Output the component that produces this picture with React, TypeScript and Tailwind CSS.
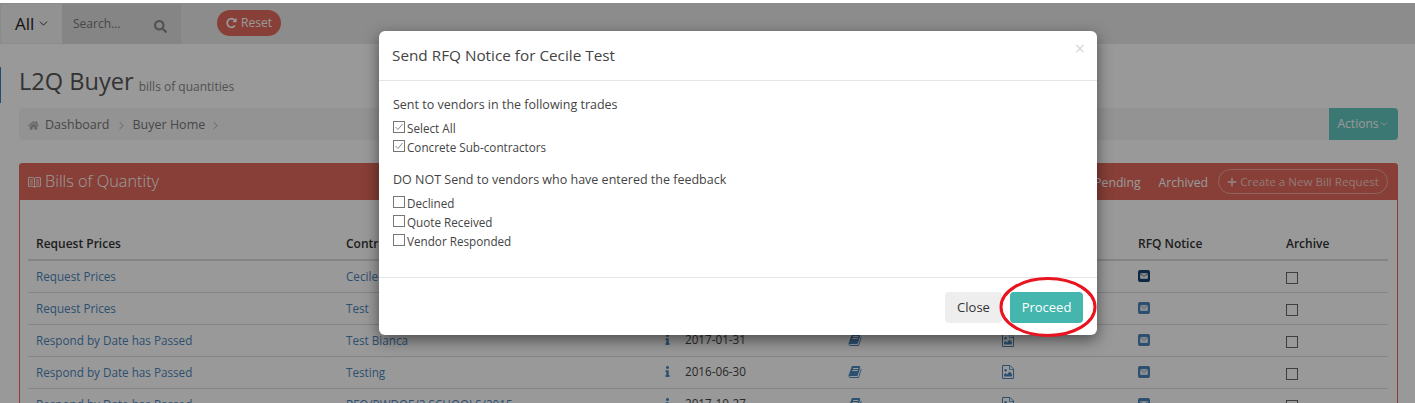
import { ChevronDown, ChevronRight } from "lucide-react";
import { FaHome, FaInfo, FaPlus, FaSearch } from "react-icons/fa";

const rows = [
  ["Request Prices", "Cecile Test", "2017-02-28", true],
  ["Request Prices", "Test", "2017-02-15", false],
  ["Respond by Date has Passed", "Test Bianca", "2017-01-31", false],
  ["Respond by Date has Passed", "Testing", "2016-06-30", false],
  ["Respond by Date has Passed", "RFQ/PWDOE/2 SCHOOLS/2015", "2017-10-27", false],
] as const;

function BookIcon() {
  return (
    <svg viewBox="0 0 1792 1792" className="h-[14px] w-[14px] text-[#4d86bb]" fill="currentColor">
      <path d="M1703 478q40 57 18 129l-275 906q-19 64-76.5 107.5t-122.5 43.5h-923q-77 0-148.5-53.5t-99.5-131.5q-24-67-2-127 0-4 3-27t4-37q1-8-3-21.5t-3-19.5q2-11 8-21t16.5-23.5 16.5-23.5q23-38 45-91.5t30-91.5q3-10 .5-30t-.5-28q3-11 17-28t17-23q21-36 42-92t25-90q1-9-2.5-32t.5-28q4-13 22-30.5t22-22.5q19-26 42.5-84.5t27.5-96.5q1-8-3-25.5t-2-26.5q2-8 9-18t18-23 17-21q8-12 16.5-30.5t15-35 16-36 19.5-32 26.5-23.5 36-11.5 47.5 5.5l-1 3q38-9 51-9h761q74 0 114 56t18 130l-274 906q-36 119-71.5 153.5t-128.5 34.5h-869q-27 0-38 15-11 16-1 43 24 70 144 70h923q29 0 56-15.5t35-41.5l300-987q7-22 5-57 38 15 59 43zm-1064 2q-4 13 2 22.5t20 9.5h608q13 0 25.5-9.5t16.5-22.5l21-64q4-13-2-22.5t-20-9.5h-608q-13 0-25.5 9.5t-16.5 22.5zm-83 256q-4 13 2 22.5t20 9.5h608q13 0 25.5-9.5t16.5-22.5l21-64q4-13-2-22.5t-20-9.5h-608q-13 0-25.5 9.5t-16.5 22.5z" />
    </svg>
  );
}

function FileImageIcon() {
  return (
    <svg viewBox="0 0 12 14" className="h-[14px] w-[12px] text-[#4d86bb]" fill="none" stroke="currentColor">
      <path d="M.5.5H8L11.5 4V13.5H.5Z" />
      <path d="M7.5.5V4.5H11.5" strokeWidth="0.8" />
      <circle cx="3.6" cy="5.2" r="1.2" fill="currentColor" stroke="none" />
      <path d="M2 11.5V9.6L3.6 8L5 9.4L7.6 6.6L10 9V11.5Z" fill="currentColor" stroke="none" />
    </svg>
  );
}

function MailIcon({ dark }: { dark: boolean }) {
  return (
    <svg viewBox="0 0 12 12" className={dark ? "h-[12px] w-[12px] text-[#16436f]" : "h-[12px] w-[12px] text-[#4d86bb]"}>
      <rect width="12" height="12" rx="2" fill="currentColor" />
      <rect x="2.2" y="3.2" width="7.6" height="5.6" fill="#f2f2f2" />
      <path d="M2.2 3.6L6 6.4L9.8 3.6" fill="none" stroke="currentColor" strokeWidth="0.7" />
    </svg>
  );
}

function OpenBookIcon() {
  return (
    <svg viewBox="0 0 13 12" className="h-[12px] w-[13px]" fill="none" stroke="currentColor" strokeWidth="0.9">
      <path d="M6.5 2.4C5 1.4 2.8 1.2.6 1.6V10.4C2.8 10 5 10.2 6.5 11.2C8 10.2 10.2 10 12.4 10.4V1.6C10.2 1.2 8 1.4 6.5 2.4V11.2" />
      <path d="M2 4H5M2 6H5M2 8H5M8 4H11M8 6H11M8 8H11" strokeWidth="0.8" />
    </svg>
  );
}

function ResetIcon() {
  return (
    <svg viewBox="0 0 1536 1792" className="h-[12px] w-[11px]" fill="currentColor">
      <path d="M1536 256v448q0 26-19 45t-45 19h-448q-42 0-59-40-17-39 14-69l138-138q-148-137-349-137-104 0-198.5 40.5t-163.5 109.5-109.5 163.5-40.5 198.5 40.5 198.5 109.5 163.5 163.5 109.5 198.5 40.5q119 0 225-52t179-147q7-10 23-12 15 0 25 9l137 138q9 8 9.5 20.5t-7.5 22.5q-109 132-264 204.5t-327 72.5q-156 0-298-61t-245-164-164-245-61-298 61-298 164-245 245-164 298-61q147 0 284.5 55.5t244.5 156.5l130-129q29-31 70-14 39 17 39 59z" />
    </svg>
  );
}

function Box({ checked }: { checked?: boolean }) {
  return (
    <span className="-mt-[3px] flex h-[12px] w-[12px] shrink-0 items-center justify-center border border-[#767676] bg-white">
      {checked && (
        <svg viewBox="0 0 10 10" className="h-[10px] w-[10px]" fill="none" stroke="#8a8a8a" strokeWidth="1">
          <path d="M1.5 5 L4 7.5 L8.5 2" />
        </svg>
      )}
    </span>
  );
}

function Check({ label, checked }: { label: string; checked?: boolean }) {
  return (
    <div className="flex h-[19px] items-center gap-[2px] text-[11.7px] text-[#444]">
      <Box checked={checked} />
      <span>{label}</span>
    </div>
  );
}

export default function App() {
  return (
    <div className="relative h-[403px] w-[1415px] overflow-hidden bg-white font-['Open_Sans',sans-serif] text-[13px] text-[#333]">
      <div className="mt-[3px] flex h-[41px] items-stretch bg-[#e9e9e9]">
        <div className="ml-[1px] mt-[1px] flex h-[39px] w-[61px] items-center rounded-l-[4px] bg-[#f3f3f3] pl-[14px] text-[17px] text-[#222]">
          All <ChevronDown className="ml-[3px] h-[13px] w-[13px]" strokeWidth={1.6} />
        </div>
        <div className="relative mt-[1px] flex h-[40px] w-[119px] items-center bg-[#dedede] pl-[11px] text-[12px] text-[#777]">
          Search...
          <FaSearch className="absolute left-[92px] top-[16px] text-[13px] text-[#888]" />
        </div>
        <div className="ml-[36px] mt-[7px] flex h-[26px] w-[64px] items-center justify-center gap-[4px] rounded-full bg-[#e26a5d] text-[12px] text-[#fff]">
          <ResetIcon /> Reset
        </div>
      </div>

      <main className="relative bg-white px-[19px] pr-[17px]">
        <div className="absolute left-0 top-[23px] h-[36px] w-[1px] bg-[#3b7fb8]" />
        <div className="flex h-[64px] items-end pb-[12px]">
          <h1 className="text-[23.6px] font-normal leading-[30px] text-[#555]">L2Q Buyer</h1>
          <span className="ml-[5px] text-[12px] text-[#888]">bills of quantities</span>
        </div>
        <div className="flex h-[32px] items-center justify-between rounded-[4px] bg-[#f5f5f5]">
          <div className="flex items-center pl-[9px] pt-[2px] text-[12.5px] text-[#777]">
            <FaHome className="mr-[6px] text-[11px] text-[#aaa]" /> Dashboard
            <ChevronRight className="mx-[5px] h-[13px] w-[13px] text-[#999]" strokeWidth={1.5} /> Buyer Home
            <ChevronRight className="ml-[4px] h-[13px] w-[13px] text-[#999]" strokeWidth={1.5} />
          </div>
          <div className="flex h-[32px] w-[69px] items-center justify-center rounded-r-[4px] bg-[#65c8c0] text-[12px] text-white">
            Actions <ChevronDown className="ml-[1px] h-[10px] w-[10px]" strokeWidth={2} />
          </div>
        </div>

        <section className="mt-[23px] rounded-t-[4px] border-x border-[#e7685d]">
          <div className="-mx-px flex h-[37px] items-center justify-between rounded-t-[4px] bg-[#e26a5d] pl-[9px] pr-[10px] text-white">
            <div className="flex items-center text-[16.3px] font-light">
              <OpenBookIcon />
              <span className="ml-[4px]">Bills of Quantity</span>
            </div>
            <div className="flex items-center text-[12.2px]">
              <span className="mt-[4px]">Pending</span>
              <span className="ml-[18px] mt-[4px]">Archived</span>
              <span className="ml-[10px] flex h-[25px] w-[170px] items-center justify-center gap-[3px] rounded-full border border-[#f0a79f] text-[11.6px] text-[#f5c9c3]">
                <FaPlus className="text-[10px]" /> Create a New Bill Request
              </span>
            </div>
          </div>

          <div className="px-[8px] pt-[28px]">
            <table className="w-[1360px] table-fixed border-collapse text-[11.7px]">
              <colgroup>
                <col className="w-[310px]" />
                <col className="w-[310px]" />
                <col className="w-[190px]" />
                <col className="w-[154px]" />
                <col className="w-[138px]" />
                <col className="w-[148px]" />
                <col className="w-[110px]" />
              </colgroup>
              <thead>
                <tr className="h-[32px] border-b-2 border-[#ddd] text-left text-[12px] font-semibold text-[#333]">
                  <th className="pl-[8px] font-semibold">Request Prices</th>
                  <th className="pl-[8px] font-semibold">Contract</th>
                  <th className="pl-[8px] font-semibold">Date</th>
                  <th className="pl-[8px] font-semibold">Bill</th>
                  <th className="pl-[8px] font-semibold">Files</th>
                  <th className="pl-[8px] font-semibold">RFQ Notice</th>
                  <th className="pl-[8px] font-semibold">Archive</th>
                </tr>
              </thead>
              <tbody>
                {rows.map(([status, name, date, dark], i) => (
                  <tr key={i} className="h-[32px] border-b border-[#ddd]">
                    <td className="pl-[8px] pt-[1px] text-[#4d86bb]">{status}</td>
                    <td className="pl-[8px] pt-[1px] text-[#4d86bb]">{name}</td>
                    <td className="pl-[14px]">
                      <span className="flex items-center gap-[12px]">
                        <FaInfo className="text-[11px] text-[#4d86bb]" />
                        <span className="text-[#444]">{date}</span>
                      </span>
                    </td>
                    <td className="pl-[10px]"><BookIcon /></td>
                    <td className="pl-[10px]"><FileImageIcon /></td>
                    <td className="pl-[8px]"><MailIcon dark={dark} /></td>
                    <td className="pl-[8px]">
                      <span className="mt-[4px] block h-[12px] w-[12px] border border-[#666]" />
                    </td>
                  </tr>
                ))}
              </tbody>
            </table>
          </div>
        </section>
      </main>

      <div className="absolute inset-0 top-[3px] bg-black/40" />

      <div className="absolute left-[379px] top-[31px] flex h-[304px] w-[718px] flex-col rounded-[6px] bg-white shadow-[0_5px_15px_rgba(0,0,0,0.5)]">
        <div className="relative flex h-[50px] shrink-0 items-center border-b border-[#e5e5e5] pl-[13px] text-[15.3px] text-[#444]">
          Send RFQ Notice for Cecile Test
          <span className="absolute right-[12px] top-[7px] text-[18px] leading-[20px] text-[#d8d8d8]">×</span>
        </div>
        <div className="h-[197px] shrink-0 border-b border-[#e5e5e5] pl-[14px] pt-[15px]">
          <p className="mb-[5px] h-[18px] text-[12.5px] leading-[18px] text-[#444]">Sent to vendors in the following trades</p>
          <Check label="Select All" checked />
          <Check label="Concrete Sub-contractors" checked />
          <p className="mb-[5px] mt-[14px] h-[18px] text-[12.5px] leading-[18px] text-[#444]">DO NOT Send to vendors who have entered the feedback</p>
          <Check label="Declined" />
          <Check label="Quote Received" />
          <Check label="Vendor Responded" />
        </div>
        <div className="flex flex-1 items-start justify-end gap-[8px] pr-[14px] pt-[14px] text-[13px]">
          <div className="flex h-[31px] w-[57px] items-center justify-center rounded-[4px] bg-[#eeeeee] text-[#333]">Close</div>
          <div className="flex h-[31px] w-[73px] items-center justify-center rounded-[4px] bg-[#44b6ae] text-white">Proceed</div>
        </div>
      </div>

      <svg className="absolute left-[999px] top-[275px] h-[64px] w-[100px]" viewBox="0 0 100 64" fill="none">
        <ellipse cx="49" cy="32" rx="47" ry="28.5" stroke="#e8141f" strokeWidth="3" />
      </svg>
    </div>
  );
}
